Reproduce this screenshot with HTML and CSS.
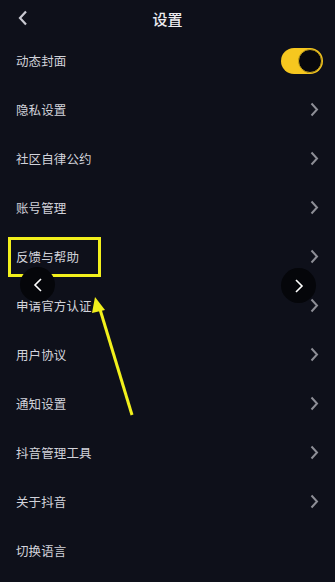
FILE: index.html
```html
<!DOCTYPE html>
<html lang="zh">
<head>
<meta charset="utf-8">
<link rel="stylesheet" href="styles.css">
</head>
<body>
<div class="screen">
  <header class="topbar">
    <svg class="back" width="12" height="16" viewBox="0 0 12 16"><path d="M9 1.5 L3 8 L9 14.5" fill="none" stroke="#c9c9d2" stroke-width="2.2"/></svg>
    <h1 class="title">设置</h1>
  </header>
  <ul class="list">
    <li class="row"><span>动态封面</span><span class="toggle"><span class="knob"></span></span></li>
    <li class="row"><span>隐私设置</span><svg class="chev" width="9" height="15" viewBox="0 0 9 15"><path d="M1.5 1.5 L7 7.5 L1.5 13.5" fill="none" stroke="#8d8e96" stroke-width="2"/></svg></li>
    <li class="row"><span>社区自律公约</span><svg class="chev" width="9" height="15" viewBox="0 0 9 15"><path d="M1.5 1.5 L7 7.5 L1.5 13.5" fill="none" stroke="#8d8e96" stroke-width="2"/></svg></li>
    <li class="row"><span>账号管理</span><svg class="chev" width="9" height="15" viewBox="0 0 9 15"><path d="M1.5 1.5 L7 7.5 L1.5 13.5" fill="none" stroke="#8d8e96" stroke-width="2"/></svg></li>
    <li class="row"><span>反馈与帮助</span><svg class="chev" width="9" height="15" viewBox="0 0 9 15"><path d="M1.5 1.5 L7 7.5 L1.5 13.5" fill="none" stroke="#8d8e96" stroke-width="2"/></svg></li>
    <li class="row"><span>申请官方认证</span><svg class="chev" width="9" height="15" viewBox="0 0 9 15"><path d="M1.5 1.5 L7 7.5 L1.5 13.5" fill="none" stroke="#8d8e96" stroke-width="2"/></svg></li>
    <li class="row"><span>用户协议</span><svg class="chev" width="9" height="15" viewBox="0 0 9 15"><path d="M1.5 1.5 L7 7.5 L1.5 13.5" fill="none" stroke="#8d8e96" stroke-width="2"/></svg></li>
    <li class="row"><span>通知设置</span><svg class="chev" width="9" height="15" viewBox="0 0 9 15"><path d="M1.5 1.5 L7 7.5 L1.5 13.5" fill="none" stroke="#8d8e96" stroke-width="2"/></svg></li>
    <li class="row"><span>抖音管理工具</span><svg class="chev" width="9" height="15" viewBox="0 0 9 15"><path d="M1.5 1.5 L7 7.5 L1.5 13.5" fill="none" stroke="#8d8e96" stroke-width="2"/></svg></li>
    <li class="row"><span>关于抖音</span><svg class="chev" width="9" height="15" viewBox="0 0 9 15"><path d="M1.5 1.5 L7 7.5 L1.5 13.5" fill="none" stroke="#8d8e96" stroke-width="2"/></svg></li>
    <li class="row"><span>切换语言</span></li>
  </ul>

  <div class="highlight"></div>
  <div class="nav-btn nav-prev"><svg width="12" height="14" viewBox="0 0 12 14"><path d="M9 1 L3 7 L9 13" fill="none" stroke="#ffffff" stroke-width="1.6"/></svg></div>
  <div class="nav-btn nav-next"><svg width="12" height="14" viewBox="0 0 12 14"><path d="M3 1 L9 7 L3 13" fill="none" stroke="#ffffff" stroke-width="1.6"/></svg></div>
  <svg class="arrow" width="335" height="582" viewBox="0 0 335 582">
    <line x1="132" y1="415" x2="99" y2="306" stroke="#f2f01c" stroke-width="3"/>
    <polygon points="95,297 105,310 92,313" fill="#f2f01c"/>
  </svg>
</div>
</body>
</html>
```
FILE: styles.css
```css
* { box-sizing: border-box; }
html, body {
  margin: 0;
  padding: 0;
  background: #0e101a;
}
.screen {
  position: relative;
  width: 335px;
  height: 582px;
  overflow: hidden;
  background: #0e101a;
  font-family: "Noto Sans CJK SC", "Noto Sans", sans-serif;
  color: #d2d3da;
}
.topbar {
  position: relative;
  height: 36px;
  display: flex;
  align-items: center;
  justify-content: center;
}
.back {
  position: absolute;
  left: 17px;
  top: 10px;
}
.title {
  margin: 0;
  font-size: 15px;
  font-weight: 500;
  color: #ececf0;
  line-height: 1;
}
.list {
  list-style: none;
  margin: 0;
  padding: 0;
}
.row {
  height: 49px;
  display: flex;
  align-items: center;
  justify-content: space-between;
  padding: 0 16px 0 16px;
  font-size: 12.5px;
  letter-spacing: 0.1px;
}
.chev {
  margin-right: 0;
}
.toggle {
  width: 42px;
  height: 26px;
  border-radius: 13px;
  background: #f6c71f;
  display: flex;
  align-items: center;
  justify-content: flex-end;
  padding-right: 1px;
  margin-right: -4px;
}
.knob {
  width: 24px;
  height: 24px;
  border-radius: 50%;
  background: #07070c;
  border: 1px solid #c9a51c;
}
.highlight {
  position: absolute;
  left: 8px;
  top: 237px;
  width: 93px;
  height: 40px;
  border: 3px solid #f2f01c;
}
.nav-btn {
  position: absolute;
  width: 35px;
  height: 35px;
  border-radius: 50%;
  background: #05060a;
  display: flex;
  align-items: center;
  justify-content: center;
}
.nav-prev { left: 20px; top: 267px; }
.nav-next { left: 281px; top: 268px; }
.arrow {
  position: absolute;
  left: 0;
  top: 0;
  pointer-events: none;
}
```
